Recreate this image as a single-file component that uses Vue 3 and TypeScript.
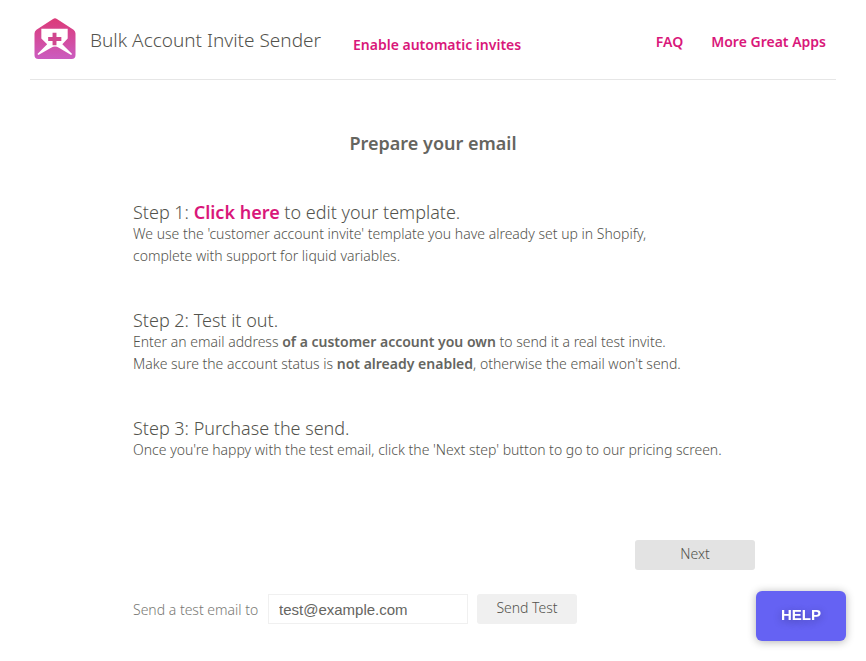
<script setup lang="ts">
import { ref } from 'vue'

const email = ref<string>('test@example.com')
</script>

<template>
  <div class="page">
    <header class="header">
      <div class="brand">
        <svg class="logo" viewBox="0 0 42 42" aria-hidden="true">
          <defs>
            <linearGradient id="logo-fill" x1="0" y1="0" x2="0" y2="1">
              <stop offset="0" stop-color="#dc3a78" />
              <stop offset="1" stop-color="#cb5cc0" />
            </linearGradient>
          </defs>
          <path
            d="M19 1Q21 -0.500 23 1L40 12Q42 13.500 42 16V38Q42 42 38 42H4Q0 42 0 38V16Q0 13.500 2 12Z"
            fill="url(#logo-fill)"
          />
          <path
            d="M7 11H34V21L28.500 27 38.500 37 37.500 38 25 30.500Q21 28 17 30.500L4 38 3 37 13 27 7 21Z"
            fill="#fff"
          />
          <path d="M18.500 15H22.500V19.500H27.500V23.500H22.500V28H18.500V23.500H14V19.500H18.500Z" fill="#d0468f" />
        </svg>
        <h1 class="name">Bulk Account Invite Sender</h1>
      </div>
      <a class="link automatic" href="#automatic">Enable automatic invites</a>
      <nav class="nav">
        <a class="link" href="#faq">FAQ</a>
        <a class="link" href="#apps">More Great Apps</a>
      </nav>
    </header>

    <main>
      <h2 class="title">Prepare your email</h2>
      <div class="content">
        <section class="step">
          <h3 class="step-title">Step 1: <a href="#template">Click here</a> to edit your template.</h3>
          <p>
            We use the 'customer account invite' template you have already set up in Shopify,<br />
            complete with support for liquid variables.
          </p>
        </section>
        <section class="step">
          <h3 class="step-title">Step 2: Test it out.</h3>
          <p>
            Enter an email address <strong>of a customer account you own</strong> to send it a real test invite.<br />
            Make sure the account status is <strong>not already enabled</strong>, otherwise the email won't send.
          </p>
        </section>
        <section class="step">
          <h3 class="step-title">Step 3: Purchase the send.</h3>
          <p>Once you're happy with the test email, click the 'Next step' button to go to our pricing screen.</p>
        </section>
        <div class="actions">
          <button class="button next" type="button">Next</button>
        </div>
        <form class="test" @submit.prevent>
          <label for="test-email">Send a test email to</label>
          <input id="test-email" v-model="email" type="email" />
          <button class="button send" type="submit">Send Test</button>
        </form>
      </div>
    </main>

    <button class="help" type="button">HELP</button>
  </div>
</template>

<style>
body {
  background: #fff;
}
</style>

<style scoped>
.page {
  color: #53534d;
  font-family: "Noto Sans", "Open Sans", sans-serif;
  font-size: 14px;
  font-weight: 300;
  line-height: 22px;
}

h1,
h2,
h3,
p {
  margin: 0;
}

a {
  color: #d9177a;
  font-weight: 600;
  text-decoration: none;
}

.header {
  display: flex;
  align-items: center;
  margin: 0 30px;
  padding: 18px 10px 20px 4px;
  border-bottom: 1px solid #e6e6e6;
}

.brand {
  display: flex;
  align-items: center;
  gap: 14px;
}

.logo {
  width: 42px;
  height: 41px;
}

.name {
  padding-top: 2px;
  font-size: 19px;
  font-weight: 300;
  white-space: nowrap;
}

.link {
  font-size: 14px;
  white-space: nowrap;
}

.automatic {
  margin-left: 32px;
  padding-top: 12px;
}

.nav {
  display: flex;
  gap: 28px;
  margin-left: auto;
  padding-top: 6px;
}

.title {
  padding-top: 51px;
  color: #65655f;
  font-size: 18px;
  font-weight: 600;
  line-height: 24px;
  text-align: center;
}

.content {
  max-width: 622px;
  margin: 0 auto;
  padding: 46px 0 36px 22px;
}

.step {
  margin-bottom: 42px;
}

.step-title {
  font-size: 18px;
  font-weight: 300;
}

.step-title a {
  font-weight: 600;
}

strong {
  color: #65655f;
  font-weight: 600;
}

.actions {
  display: flex;
  justify-content: flex-end;
  padding-top: 37px;
}

.button {
  height: 30px;
  padding: 0 0 2px;
  border: 0;
  border-radius: 3px;
  color: #53534d;
  font: inherit;
  cursor: pointer;
}

.next {
  width: 120px;
  background: #e3e3e3;
}

.test {
  display: flex;
  align-items: center;
  margin-top: 24px;
}

.test label {
  width: 135px;
  padding-top: 2px;
  color: #787874;
  white-space: nowrap;
}

.test input {
  box-sizing: border-box;
  width: 200px;
  height: 30px;
  padding: 0 10px;
  border: 1px solid #f0f0f0;
  color: #65655f;
  font: 15px "Liberation Sans", Arial, sans-serif;
}

.send {
  width: 100px;
  margin-left: 9px;
  background: #f0f0f0;
}

.help {
  position: fixed;
  right: 20px;
  bottom: 20px;
  width: 90px;
  height: 50px;
  padding: 0 0 3px;
  border: 0;
  border-radius: 6px;
  background: #6562f3;
  box-shadow: 0 1px 8px rgba(0, 0, 0, 0.3);
  color: #fff;
  font: 700 15px "Liberation Sans", Arial, sans-serif;
  text-shadow: 0 2px 8px rgba(0, 0, 0, 0.3);
  cursor: pointer;
}
</style>
